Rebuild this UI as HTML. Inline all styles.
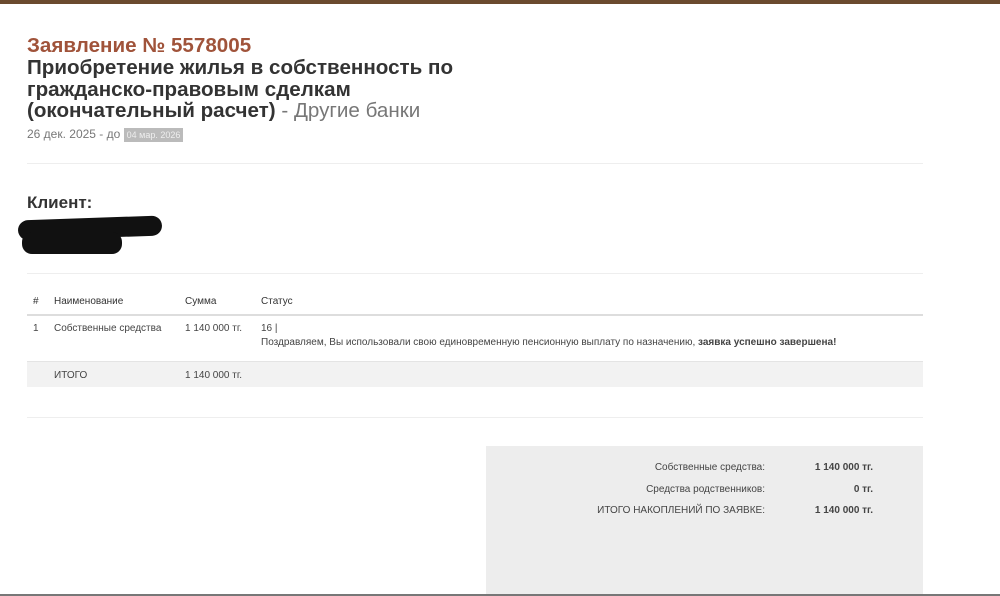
<!DOCTYPE html>
<html><head><meta charset="utf-8"><style>
*{margin:0;padding:0;box-sizing:border-box}
body{width:1000px;height:596px;background:#fff;font-family:"Liberation Sans",sans-serif;color:#333;position:relative;overflow:hidden}
.a{position:absolute;white-space:nowrap}
.t{font-weight:bold;font-size:20.6px;line-height:21.5px;color:#333}
.s{font-size:10px;color:#444}
.hr{position:absolute;left:27px;width:896px;height:1px;background:#eee}
</style></head><body>
<div class="a" style="left:0;top:0;width:1000px;height:4px;background:#6b4a2e"></div>
<div class="a t" style="left:27px;top:35px;color:#a0533a">Заявление № 5578005</div>
<div class="a t" style="left:27px;top:57px">Приобретение жилья в собственность по<br>гражданско-правовым сделкам<br>(окончательный расчет) <span style="font-weight:normal;color:#777">- Другие банки</span></div>
<div class="a" style="left:27px;top:127px;font-size:12px;color:#777">26 дек. 2025 - до <span style="background:#bbb;color:#eee;font-size:9px;padding:2px 3px">04 мар. 2026</span></div>
<div class="hr" style="top:163px"></div>
<div class="a" style="left:27px;top:193px;font-size:17px;font-weight:bold">Клиент:</div>
<div class="a" style="left:18px;top:218px;width:144px;height:20px;background:#111;border-radius:10px;transform:rotate(-2deg)"></div>
<div class="a" style="left:22px;top:232px;width:100px;height:22px;background:#111;border-radius:10px"></div>
<div class="hr" style="top:273px"></div>
<div class="a s" style="left:33px;top:296px;color:#333">#</div>
<div class="a s" style="left:54px;top:296px;color:#333">Наименование</div>
<div class="a s" style="left:185px;top:296px;color:#333">Сумма</div>
<div class="a s" style="left:261px;top:296px;color:#333">Статус</div>
<div class="a" style="left:27px;top:314px;width:896px;height:2px;background:#ddd"></div>
<div class="a s" style="left:33px;top:323px">1</div>
<div class="a s" style="left:54px;top:323px">Собственные средства</div>
<div class="a s" style="left:185px;top:323px">1 140 000 тг.</div>
<div class="a s" style="left:261px;top:323px">16 |</div>
<div class="a s" style="left:261px;top:337px">Поздравляем, Вы использовали свою единовременную пенсионную выплату по назначению, <b>заявка успешно завершена!</b></div>
<div class="a" style="left:27px;top:361px;width:896px;height:26px;background:#f2f2f2;border-top:1px solid #e4e4e4"></div>
<div class="a s" style="left:54px;top:370px">ИТОГО</div>
<div class="a s" style="left:185px;top:370px">1 140 000 тг.</div>
<div class="hr" style="top:417px"></div>
<div class="a" style="left:486px;top:446px;width:437px;height:150px;background:#ededed"></div>
<div class="a s" style="right:235px;top:462px;text-align:right">Собственные средства:</div>
<div class="a s" style="right:235px;top:484px">Средства родственников:</div>
<div class="a s" style="right:235px;top:505px">ИТОГО НАКОПЛЕНИЙ ПО ЗАЯВКЕ:</div>
<div class="a s" style="right:127px;top:462px;font-weight:bold">1 140 000 тг.</div>
<div class="a s" style="right:127px;top:484px;font-weight:bold">0 тг.</div>
<div class="a s" style="right:127px;top:505px;font-weight:bold">1 140 000 тг.</div>
<div class="a" style="left:0;top:594px;width:1000px;height:2px;background:#777"></div>
</body></html>
